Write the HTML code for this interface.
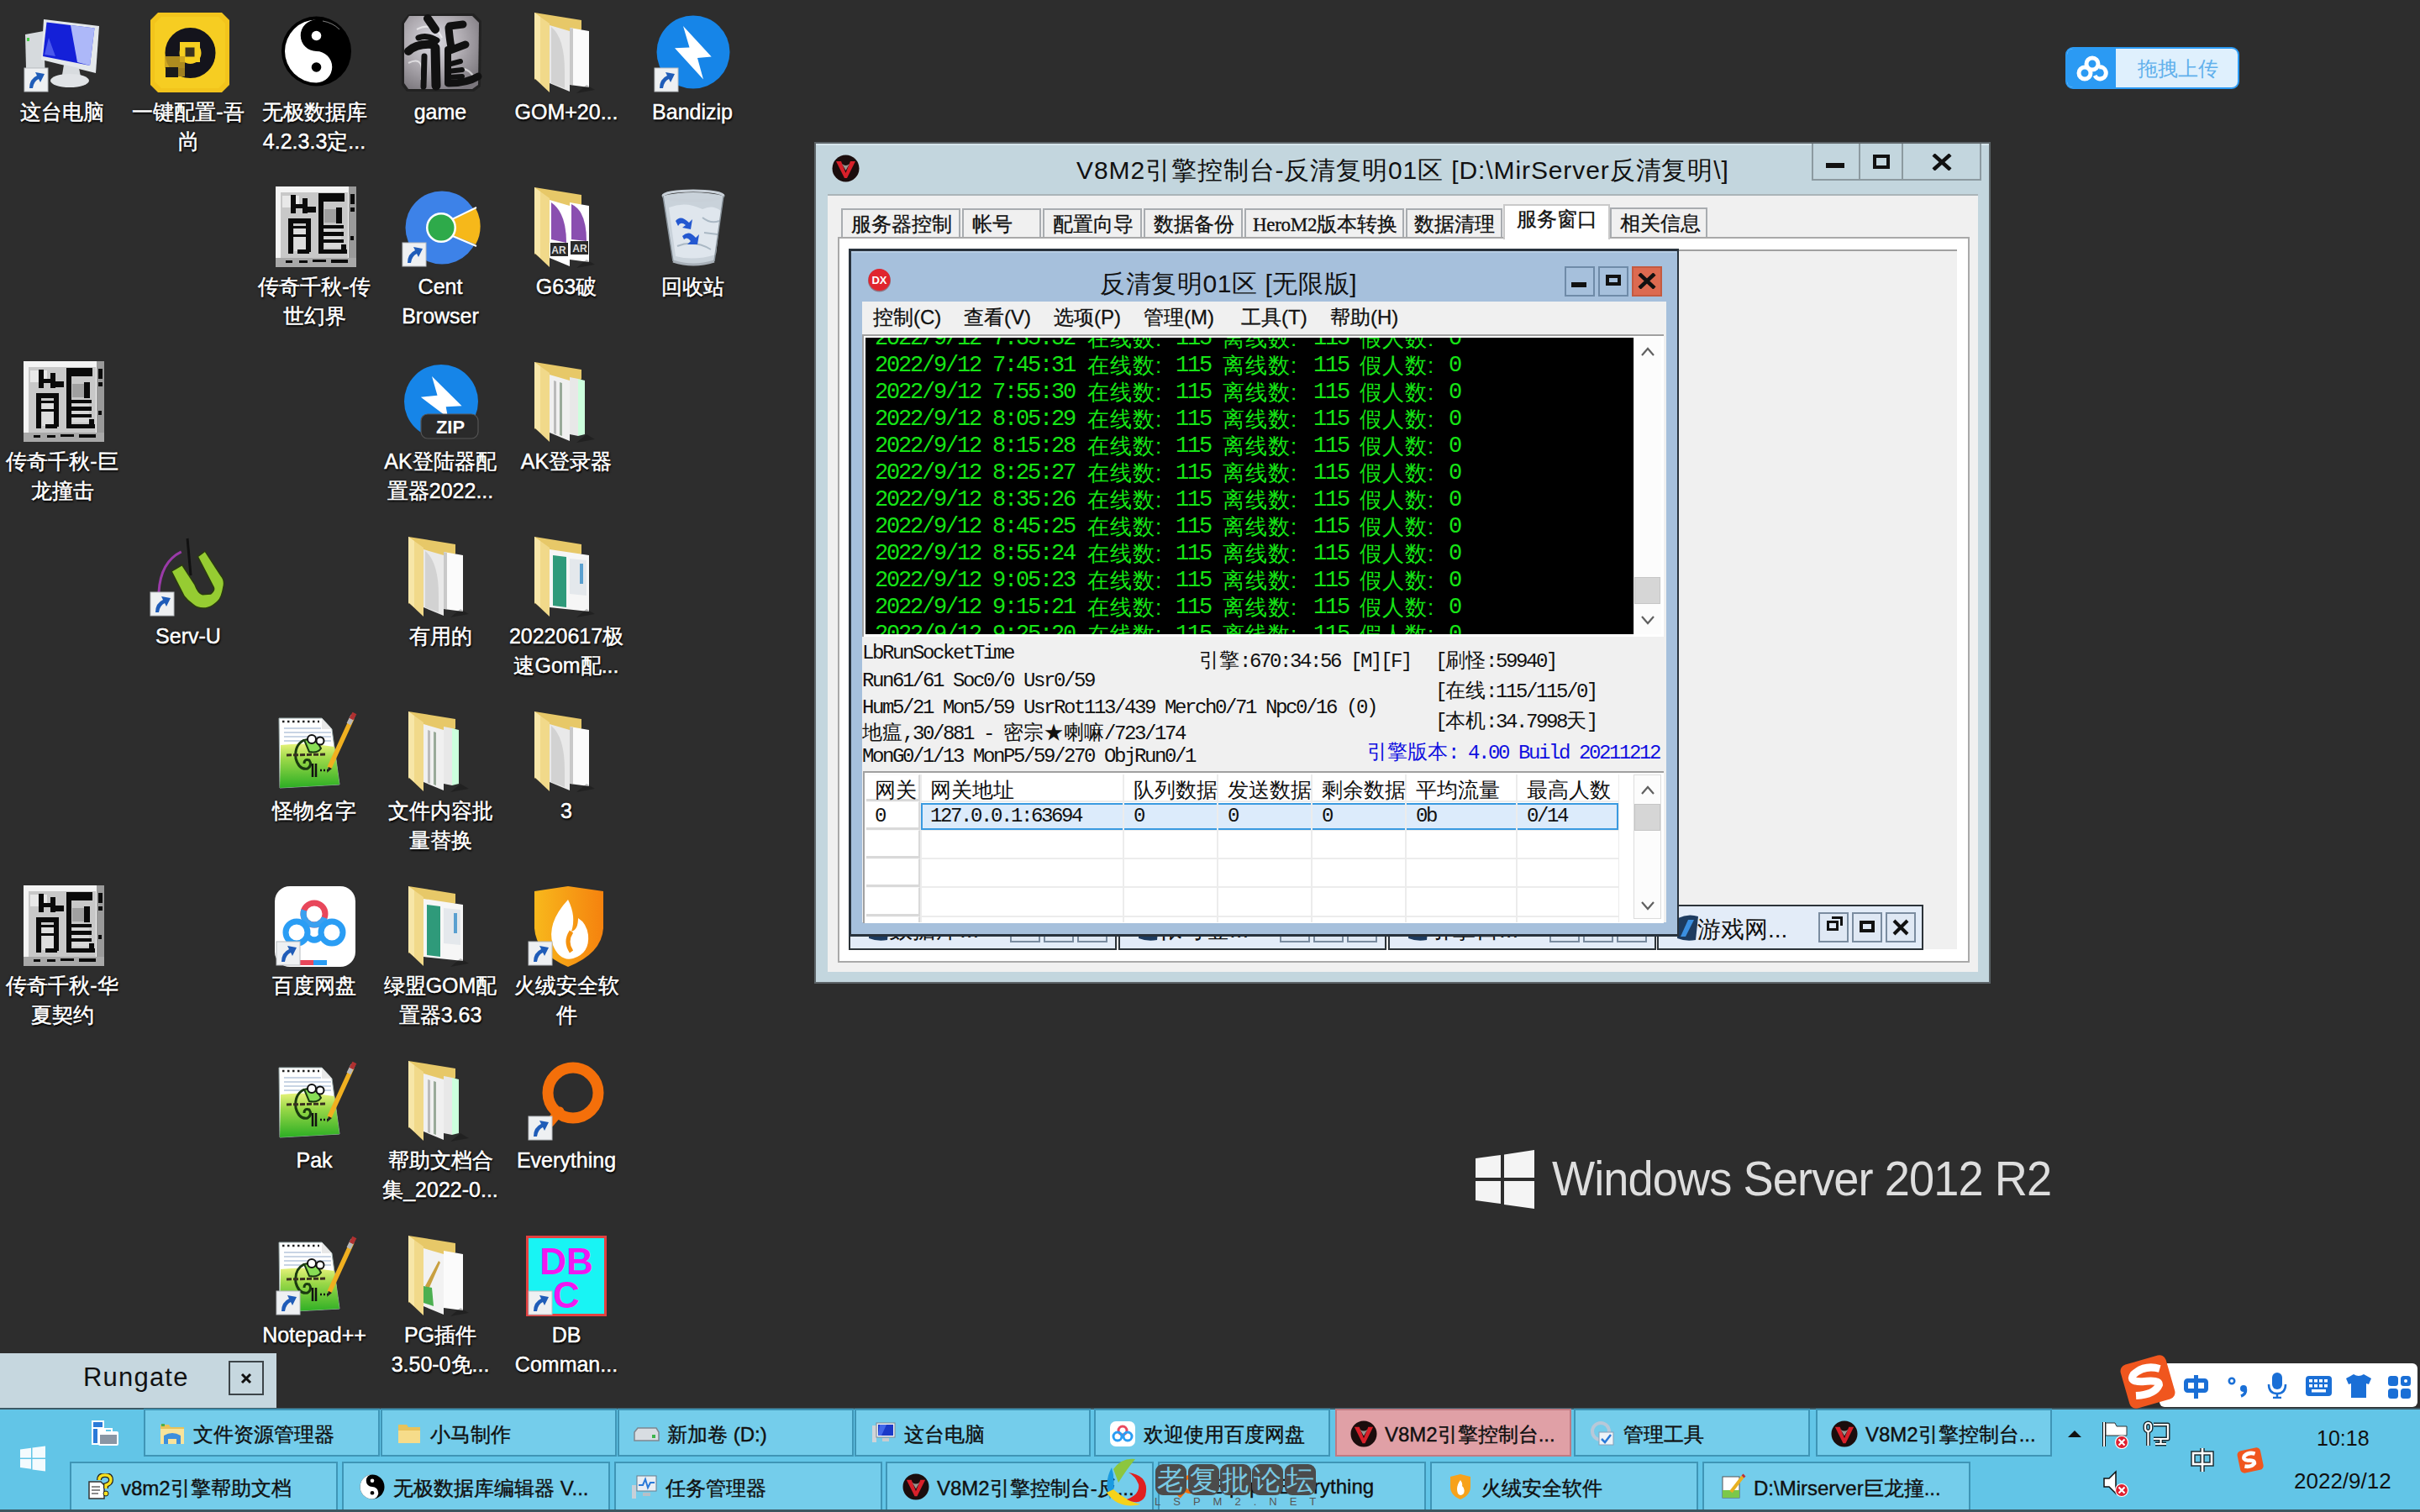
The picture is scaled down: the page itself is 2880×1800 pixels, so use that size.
<!DOCTYPE html>
<html><head><meta charset="utf-8">
<style>
*{margin:0;padding:0;box-sizing:border-box}
html,body{width:2880px;height:1800px;overflow:hidden;background:#2d2d2d;font-family:"Liberation Sans",sans-serif}
.a{position:absolute}
.mono{font-family:"Liberation Mono",monospace}
/* main window */
#mw{left:970px;top:170px;width:1398px;height:1000px;background:#c3d6de;border:1px solid #6f7a80}
#con .ln{position:absolute;left:0;height:32px;white-space:nowrap;color:#16e416;font-family:"Liberation Mono",monospace;font-size:27px;letter-spacing:-2.2px}
#con .ln span{position:absolute;top:0}
#con .ln .c{font-family:"Liberation Sans",sans-serif;letter-spacing:1px;font-size:26px;top:-2px}
.st{position:absolute;white-space:nowrap;font-family:"Liberation Mono",monospace;font-size:24px;letter-spacing:-2.4px;color:#111}
.cjk{font-family:"Liberation Sans",sans-serif;letter-spacing:0}
.tab{position:absolute;top:248px;height:36px;background:#f0f0f0;border:2px solid #a8acb0;border-bottom:none;font-size:24px;color:#111;padding-left:10px;line-height:34px;white-space:nowrap;-webkit-text-stroke:0.3px #111}
.mi{position:absolute;top:362px;font-size:24px;color:#111;white-space:nowrap;-webkit-text-stroke:0.3px #111}
.lbl{position:absolute;width:160px;text-align:center;font-size:25px;line-height:35px;color:#fff;white-space:nowrap;-webkit-text-stroke:0.5px #fff;text-shadow:1px 2px 2px #000,0 0 3px #000}
/* taskbar */
#tb{left:0;top:1676px;width:2880px;height:124px;background:#62c5e7;border-top:2px solid #3b5a66}
.ti{position:absolute;height:57px;background:#74cdeb;border:2px solid #3f95b6;font-size:24px;color:#111;white-space:nowrap;overflow:hidden}
.ti .tx{position:absolute;top:13px;-webkit-text-stroke:0.4px #111}
.ti .ic{position:absolute;top:14px;width:32px;height:28px}
</style></head><body>

<!--DESKTOP-->
<svg width="0" height="0" style="position:absolute"><defs><pattern id="dith" width="12" height="12" patternUnits="userSpaceOnUse"><rect width="6" height="6" fill="#d8d8d8"/><rect x="6" y="6" width="6" height="6" fill="#cfcfcf"/><rect x="6" y="0" width="6" height="6" fill="#7a7a7a"/></pattern></defs></svg>
<svg class="a" style="left:26px;top:15px;overflow:visible" width="96" height="96" viewBox="0 0 96 96"><path d="M4 26 L26 22 L28 84 L5 66Z" fill="#d6dadd"/><rect x="6" y="30" width="3" height="4" fill="#4c4"/><path d="M26 8 L92 16 L88 72 L23 56Z" fill="#e4e8eb"/><path d="M29.5 11.5 L86.5 18.5 L81 63 L25 52Z" fill="#1420d8"/><path d="M58 15 L86.5 18.5 L81 63 L66 59Z" fill="#c8d4ff" opacity=".85"/><path d="M32 30 L40 52 L27 50Z" fill="#8090ff" opacity=".5"/><path d="M50 62 L68 66 L70 76 L48 74Z" fill="#d8dcdf"/><ellipse cx="57" cy="81" rx="23" ry="8" fill="#e0e3e6"/><rect x="3" y="66" width="28" height="28" fill="#eef0f2"/><rect x="3" y="66" width="28" height="28" fill="none" stroke="#b8bcc0" stroke-width="1"/><path d="M9 90 Q9 79 18 75 L16 71 L27 73 L22 83 L20 79 Q14 82 13 90Z" fill="#1f5cb8"/></svg>
<div class="lbl" style="left:-6px;top:116px">这台电脑</div>
<svg class="a" style="left:176px;top:15px;overflow:visible" width="96" height="96" viewBox="0 0 96 96"><path d="M12 0 H88 L97 9 V86 L88 95 H12 L3 86 V9Z" fill="#f2c41c"/><path d="M16 5 H84 L92 13 V82 L84 90 H16 L8 82 V13Z" fill="#f6cd22"/><circle cx="50.5" cy="48" r="21.5" fill="none" stroke="#14141c" stroke-width="17"/><rect x="38" y="35" width="24" height="24" fill="#f6d020"/><rect x="44.5" y="41.5" width="11" height="11" fill="#3a3420"/><rect x="20" y="52" width="24" height="14" fill="#c8a020" opacity=".85"/><rect x="21" y="65" width="15" height="12" fill="#1a1a1a"/><rect x="36" y="66" width="8" height="10" fill="#a08020"/></svg>
<div class="lbl" style="left:144px;top:116px">一键配置-吾</div>
<div class="lbl" style="left:144px;top:151px">尚</div>
<svg class="a" style="left:326px;top:15px;overflow:visible" width="96" height="96" viewBox="0 0 96 96"><circle cx="50.5" cy="46" r="41.5" fill="#000"/><path d="M50.5 8.5 A37.5 37.5 0 0 0 50.5 83.5 A18.75 18.75 0 0 0 50.5 46 A18.75 18.75 0 0 1 50.5 8.5Z" fill="#fff"/><circle cx="50.5" cy="27.5" r="5.8" fill="#fff"/><circle cx="50.5" cy="65" r="5.8" fill="#000"/><path d="M58 10 Q70 12 78 20" stroke="#fff" stroke-width="1" opacity=".5" fill="none"/></svg>
<div class="lbl" style="left:294px;top:116px">无极数据库</div>
<div class="lbl" style="left:294px;top:151px">4.2.3.3定...</div>
<svg class="a" style="left:476px;top:15px;overflow:visible" width="96" height="96" viewBox="0 0 96 96"><defs><radialGradient id="gst" cx=".4" cy=".35" r=".75"><stop offset="0" stop-color="#dcdce4"/><stop offset=".5" stop-color="#b0acb2"/><stop offset="1" stop-color="#7a767c"/></radialGradient></defs><path d="M10 2 L88 1 L97 10 L96 88 L88 94 L8 94 L2 86 L2 12Z" fill="#222"/><path d="M11 4 L86 4 L94 12 L93 86 L86 91 L10 91 L5 84 L5 13Z" fill="url(#gst)"/><path d="M20 20 Q40 10 50 30 M60 70 Q80 60 90 80 M10 60 Q30 50 25 80" stroke="#fff" stroke-width="2" fill="none" opacity=".6"/><g stroke="#111" stroke-linecap="round" fill="none"><path d="M33 7 L42 20" stroke-width="10"/><path d="M22 30 Q32 26 44 33" stroke-width="7"/><path d="M10 46 Q20 36 40 38" stroke-width="10"/><path d="M42 42 L43 87" stroke-width="11"/><path d="M29 52 L28 88" stroke-width="7"/><path d="M59 16 L75 14 M58 18 Q60 40 62 44 L78 38" stroke-width="9"/><path d="M57 62 L72 58 M57 70 L74 68 M57 77 L74 76" stroke-width="6"/><path d="M58 84 Q80 84 93 76" stroke-width="9"/><path d="M57 44 L57 84" stroke-width="8"/></g></svg>
<div class="lbl" style="left:444px;top:116px">game</div>
<svg class="a" style="left:626px;top:15px;overflow:visible" width="96" height="96" viewBox="0 0 96 96"><path d="M10 0 L66 9 L66 20 L10 80Z" fill="#e7c868"/><path d="M28 15 L52 22 L52 94 L28 84Z" fill="#e9e9e9"/><path d="M30 17 Q46 30 46 70 L46 90 L30 84Z" fill="#d2d2d2"/><path d="M52 18 L75 22 L75 89 L52 86Z" fill="#fbfbfb"/><path d="M52 18 L56 19 L56 86 L52 86Z" fill="#c9c9c9"/><path d="M72 86 L82 92 L60 96 Z" fill="#000" opacity=".25"/><path d="M10 0 L28 13 L28 95 L10 78Z" fill="#f1d98a"/><path d="M10 0 L17 5 L17 84 L10 78Z" fill="#f7e6a8"/></svg>
<div class="lbl" style="left:594px;top:116px">GOM+20...</div>
<svg class="a" style="left:776px;top:15px;overflow:visible" width="96" height="96" viewBox="0 0 96 96"><circle cx="49" cy="47" r="43.5" fill="#1685e8"/><path d="M37 16 L70.7 52.5 L54 54 L61 79.4 L27 42.3 L44.5 41.6Z" fill="#fff"/><rect x="3" y="66" width="28" height="28" fill="#eef0f2"/><rect x="3" y="66" width="28" height="28" fill="none" stroke="#b8bcc0" stroke-width="1"/><path d="M9 90 Q9 79 18 75 L16 71 L27 73 L22 83 L20 79 Q14 82 13 90Z" fill="#1f5cb8"/></svg>
<div class="lbl" style="left:744px;top:116px">Bandizip</div>
<svg class="a" style="left:326px;top:223px;overflow:visible" width="96" height="96" viewBox="0 0 96 96"><rect x="2" y="-1" width="96" height="96" fill="#f4f4f4"/><rect x="8" y="6" width="80" height="80" fill="#c8c8c8"/><rect x="10" y="10" width="20" height="14" fill="#e8e8e8"/><rect x="60" y="26" width="14" height="16" fill="#a0a0a0"/><rect x="24" y="46" width="14" height="30" fill="#dedede"/><rect x="60" y="50" width="20" height="22" fill="#d8d8d8"/><rect x="89" y="-1" width="9" height="96" fill="#9a9a9a"/><rect x="2" y="84" width="96" height="11" fill="#a8a8a8"/><g fill="#0a0a0a"><rect x="20" y="9" width="6" height="22"/><rect x="26" y="20" width="8" height="5"/><rect x="34" y="13" width="6" height="18"/><rect x="40" y="23" width="10" height="7"/><rect x="53" y="7" width="6" height="72"/><rect x="58" y="7" width="26" height="10"/><rect x="74" y="24" width="7" height="19"/><rect x="17" y="37" width="6" height="42"/><rect x="22" y="37" width="22" height="6"/><rect x="38" y="42" width="6" height="35"/><rect x="22" y="46" width="17" height="3"/><rect x="22" y="56" width="17" height="3"/><rect x="28" y="74" width="14" height="5"/><rect x="59" y="45" width="24" height="4"/><rect x="59" y="53" width="24" height="5"/><rect x="59" y="62" width="24" height="4"/><rect x="53" y="74" width="34" height="5"/><rect x="80" y="68" width="6" height="8"/><rect x="91" y="8" width="5" height="12"/><rect x="91" y="24" width="5" height="5"/><rect x="91" y="58" width="4" height="5"/><rect x="14" y="87" width="8" height="3"/><rect x="30" y="87" width="10" height="3"/><rect x="46" y="86" width="16" height="3"/><rect x="68" y="86" width="20" height="4"/></g></svg>
<div class="lbl" style="left:294px;top:324px">传奇千秋-传</div>
<div class="lbl" style="left:294px;top:359px">世幻界</div>
<svg class="a" style="left:476px;top:223px;overflow:visible" width="96" height="96" viewBox="0 0 96 96"><circle cx="50" cy="48" r="43.5" fill="#3d82e8"/><path d="M60 40 L90 25 A43.5 43.5 0 0 1 90 68 L60 56Z" fill="#f6b81a"/><path d="M58 40 L91 24 M58 56 L91 70" stroke="#fff" stroke-width="2"/><circle cx="49" cy="48" r="18" fill="#fff"/><circle cx="49" cy="48" r="15.5" fill="#2eaa4a"/><rect x="3" y="66" width="28" height="28" fill="#eef0f2"/><rect x="3" y="66" width="28" height="28" fill="none" stroke="#b8bcc0" stroke-width="1"/><path d="M9 90 Q9 79 18 75 L16 71 L27 73 L22 83 L20 79 Q14 82 13 90Z" fill="#1f5cb8"/></svg>
<div class="lbl" style="left:444px;top:324px">Cent</div>
<div class="lbl" style="left:444px;top:359px">Browser</div>
<svg class="a" style="left:626px;top:223px;overflow:visible" width="96" height="96" viewBox="0 0 96 96"><path d="M10 0 L66 9 L66 20 L10 80Z" fill="#e7c868"/><path d="M28 15 L52 22 L52 94 L28 84Z" fill="#fff"/><path d="M30 18 Q48 30 48 66 L30 62Z" fill="#8a4fb0"/><rect x="29" y="66" width="21" height="16" fill="#2a2a2a"/><text x="39" y="79" font-size="12" font-weight="bold" fill="#ddd" text-anchor="middle" font-family="Liberation Sans">AR</text><path d="M52 18 L75 22 L75 89 L52 86Z" fill="#fff"/><path d="M54 20 Q72 28 72 64 L54 62Z" fill="#8a4fb0"/><rect x="53" y="64" width="21" height="16" fill="#2a2a2a"/><text x="64" y="77" font-size="12" font-weight="bold" fill="#ddd" text-anchor="middle" font-family="Liberation Sans">AR</text><path d="M72 86 L82 92 L60 96 Z" fill="#000" opacity=".25"/><path d="M10 0 L28 13 L28 95 L10 78Z" fill="#f1d98a"/><path d="M10 0 L17 5 L17 84 L10 78Z" fill="#f7e6a8"/></svg>
<div class="lbl" style="left:594px;top:324px">G63破</div>
<svg class="a" style="left:776px;top:223px;overflow:visible" width="96" height="96" viewBox="0 0 96 96"><path d="M13 10 Q49 2 85 10 L74 88 Q49 97 25 88Z" fill="#c9d2da"/><path d="M20 24 Q40 16 60 26 Q72 20 82 28 L76 80 Q50 88 28 82Z" fill="#dfe6ed"/><path d="M60 36 Q70 44 80 40 M62 54 L78 56 M30 70 Q50 62 70 74" stroke="#aab8c4" stroke-width="2" fill="none"/><ellipse cx="49" cy="10" rx="36" ry="6" fill="none" stroke="#c8d0d8" stroke-width="3"/><path d="M25 88 Q49 96 74 88" stroke="#a8b0b8" stroke-width="3" fill="none"/><path d="M13 10 L25 88 M85 10 L74 88" stroke="#8a949c" stroke-width="1.5"/><path d="M28 40 Q34 32 44 42 L48 38 L46 50 L36 48 L40 45 Q34 40 31 46Z" fill="#2458d0"/><path d="M36 58 Q44 50 52 60 L56 56 L54 68 L42 68 L46 64 Q42 58 38 62Z" fill="#2458d0"/></svg>
<div class="lbl" style="left:744px;top:324px">回收站</div>
<svg class="a" style="left:26px;top:431px;overflow:visible" width="96" height="96" viewBox="0 0 96 96"><rect x="2" y="-1" width="96" height="96" fill="#f4f4f4"/><rect x="8" y="6" width="80" height="80" fill="#c8c8c8"/><rect x="10" y="10" width="20" height="14" fill="#e8e8e8"/><rect x="60" y="26" width="14" height="16" fill="#a0a0a0"/><rect x="24" y="46" width="14" height="30" fill="#dedede"/><rect x="60" y="50" width="20" height="22" fill="#d8d8d8"/><rect x="89" y="-1" width="9" height="96" fill="#9a9a9a"/><rect x="2" y="84" width="96" height="11" fill="#a8a8a8"/><g fill="#0a0a0a"><rect x="20" y="9" width="6" height="22"/><rect x="26" y="20" width="8" height="5"/><rect x="34" y="13" width="6" height="18"/><rect x="40" y="23" width="10" height="7"/><rect x="53" y="7" width="6" height="72"/><rect x="58" y="7" width="26" height="10"/><rect x="74" y="24" width="7" height="19"/><rect x="17" y="37" width="6" height="42"/><rect x="22" y="37" width="22" height="6"/><rect x="38" y="42" width="6" height="35"/><rect x="22" y="46" width="17" height="3"/><rect x="22" y="56" width="17" height="3"/><rect x="28" y="74" width="14" height="5"/><rect x="59" y="45" width="24" height="4"/><rect x="59" y="53" width="24" height="5"/><rect x="59" y="62" width="24" height="4"/><rect x="53" y="74" width="34" height="5"/><rect x="80" y="68" width="6" height="8"/><rect x="91" y="8" width="5" height="12"/><rect x="91" y="24" width="5" height="5"/><rect x="91" y="58" width="4" height="5"/><rect x="14" y="87" width="8" height="3"/><rect x="30" y="87" width="10" height="3"/><rect x="46" y="86" width="16" height="3"/><rect x="68" y="86" width="20" height="4"/></g></svg>
<div class="lbl" style="left:-6px;top:532px">传奇千秋-巨</div>
<div class="lbl" style="left:-6px;top:567px">龙撞击</div>
<svg class="a" style="left:476px;top:431px;overflow:visible" width="96" height="96" viewBox="0 0 96 96"><circle cx="49" cy="47" r="44" fill="#1685e8"/><path d="M38 17 L73.6 52.2 L54.7 53.3 L57 66 L24.8 41.7 L44.5 39.8Z" fill="#fff"/><rect x="25" y="62" width="68" height="29" rx="8" fill="#2a2a2a" stroke="#555" stroke-width="1.2"/><text x="60" y="85" font-size="22" font-weight="bold" fill="#fff" text-anchor="middle" style="font-family:'Liberation Sans'">ZIP</text></svg>
<div class="lbl" style="left:444px;top:532px">AK登陆器配</div>
<div class="lbl" style="left:444px;top:567px">置器2022...</div>
<svg class="a" style="left:626px;top:431px;overflow:visible" width="96" height="96" viewBox="0 0 96 96"><path d="M10 0 L66 9 L66 20 L10 80Z" fill="#e7c868"/><path d="M28 15 L52 22 L52 94 L28 84Z" fill="#f0f0f0"/><path d="M33 22 L36 23 L36 86 L33 85Z" fill="#bbb"/><path d="M40 24 L43 25 L43 88 L40 87Z" fill="#9a9"/><path d="M52 18 L62 20 L62 88 L52 86Z" fill="#e8e8e8"/><path d="M62 20 L70 22 L70 86 L62 88Z" fill="#cfd"/><path d="M72 86 L82 92 L60 96 Z" fill="#000" opacity=".25"/><path d="M10 0 L28 13 L28 95 L10 78Z" fill="#f1d98a"/><path d="M10 0 L17 5 L17 84 L10 78Z" fill="#f7e6a8"/></svg>
<div class="lbl" style="left:594px;top:532px">AK登录器</div>
<svg class="a" style="left:176px;top:639px;overflow:visible" width="96" height="96" viewBox="0 0 96 96"><path d="M39.7 17.9 Q15 30 13 66" stroke="#9a3aa8" stroke-width="3" fill="none"/><path d="M47 2 L51 46" stroke="#111" stroke-width="3"/><path d="M28 41.2 L40.7 33.6 L55.7 56.5 Q60 68 65.1 68.8 L74.6 68.1 Q80 64 78.2 60.1 L59.3 23.7 L68 17.2 L87 46.3 Q92 52 89.9 60 Q88 72 83.3 76.8 Q76 84 68.8 84.9 Q60 86 54.2 81.2 Q47 76 43.3 71Z" fill="#96cc32" stroke="#2a3a10" stroke-width="1.5"/><rect x="3" y="66" width="28" height="28" fill="#eef0f2"/><rect x="3" y="66" width="28" height="28" fill="none" stroke="#b8bcc0" stroke-width="1"/><path d="M9 90 Q9 79 18 75 L16 71 L27 73 L22 83 L20 79 Q14 82 13 90Z" fill="#1f5cb8"/></svg>
<div class="lbl" style="left:144px;top:740px">Serv-U</div>
<svg class="a" style="left:476px;top:639px;overflow:visible" width="96" height="96" viewBox="0 0 96 96"><path d="M10 0 L66 9 L66 20 L10 80Z" fill="#e7c868"/><path d="M28 15 L52 22 L52 94 L28 84Z" fill="#e9e9e9"/><path d="M30 17 Q46 30 46 70 L46 90 L30 84Z" fill="#d2d2d2"/><path d="M52 18 L75 22 L75 89 L52 86Z" fill="#fbfbfb"/><path d="M52 18 L56 19 L56 86 L52 86Z" fill="#c9c9c9"/><path d="M72 86 L82 92 L60 96 Z" fill="#000" opacity=".25"/><path d="M10 0 L28 13 L28 95 L10 78Z" fill="#f1d98a"/><path d="M10 0 L17 5 L17 84 L10 78Z" fill="#f7e6a8"/></svg>
<div class="lbl" style="left:444px;top:740px">有用的</div>
<svg class="a" style="left:626px;top:639px;overflow:visible" width="96" height="96" viewBox="0 0 96 96"><path d="M10 0 L66 9 L66 20 L10 80Z" fill="#e7c868"/><path d="M28 15 L75 22 L75 89 L28 84Z" fill="#f6f6f6"/><path d="M32 22 L48 24 L48 84 L32 82Z" fill="#2f9a7a"/><path d="M52 26 L72 28 L72 70 L52 68Z" fill="#e4e8ec"/><path d="M64 32 L68 32 L68 56 L64 56Z" fill="#5aa0d0"/><path d="M72 86 L82 92 L60 96 Z" fill="#000" opacity=".25"/><path d="M10 0 L28 13 L28 95 L10 78Z" fill="#f1d98a"/><path d="M10 0 L17 5 L17 84 L10 78Z" fill="#f7e6a8"/></svg>
<div class="lbl" style="left:594px;top:740px">20220617极</div>
<div class="lbl" style="left:594px;top:775px">速Gom配...</div>
<svg class="a" style="left:326px;top:847px;overflow:visible" width="96" height="96" viewBox="0 0 96 96"><defs><linearGradient id="nppg" x1="0" y1="0" x2="0" y2="1"><stop offset="0" stop-color="#e6f27a"/><stop offset=".35" stop-color="#9ad848"/><stop offset="1" stop-color="#2cae24"/></linearGradient></defs><path d="M6 8 L57 8 L69 21 L78 87 L7 91Z" fill="#fff" stroke="#9aa" stroke-width="1"/><path d="M57 8 L57 21 L69 21Z" fill="#e8e8e8"/><path d="M10 12 L54 12" stroke="#222" stroke-width="2.5" stroke-dasharray="2.5 3.5"/><path d="M12 20 L56 20 M12 25 L68 25 M12 30 L68 30 M12 35 L68 35" stroke="#c8d4e4" stroke-width="2"/><path d="M8 40 Q40 36 72 42 L78 87 L7 91Z" fill="url(#nppg)"/><path d="M36 34 Q24 40 26 56 Q30 70 40 68 Q46 64 42 58 Q36 56 36 62" stroke="#1a3a10" stroke-width="3" fill="none"/><path d="M36 34 Q50 30 56 44 Q52 50 42 48Z" fill="#88dd55" stroke="#1a3a10" stroke-width="2"/><circle cx="45" cy="33" r="5" fill="#fff" stroke="#111" stroke-width="2"/><circle cx="55" cy="35" r="4.5" fill="#fff" stroke="#111" stroke-width="2"/><path d="M15 52 L62 51" stroke="#3a3020" stroke-width="3" stroke-dasharray="6 2"/><path d="M46 62 L46 78 M50 62 L50 78" stroke="#111" stroke-width="2.5"/><path d="M55 70 L66 70" stroke="#111" stroke-width="2.5" stroke-dasharray="2 2"/><path d="M66 67 L93 8" stroke="#f0b020" stroke-width="5.5"/><path d="M89 15 L94 5" stroke="#b8b8b8" stroke-width="5.5"/><path d="M92 9 L96 2" stroke="#b03030" stroke-width="5.5"/><path d="M63 73 L65 66 L69 68Z" fill="#222"/></svg>
<div class="lbl" style="left:294px;top:948px">怪物名字</div>
<svg class="a" style="left:476px;top:847px;overflow:visible" width="96" height="96" viewBox="0 0 96 96"><path d="M10 0 L66 9 L66 20 L10 80Z" fill="#e7c868"/><path d="M28 15 L52 22 L52 94 L28 84Z" fill="#f0f0f0"/><path d="M33 22 L36 23 L36 86 L33 85Z" fill="#bbb"/><path d="M40 24 L43 25 L43 88 L40 87Z" fill="#9a9"/><path d="M52 18 L62 20 L62 88 L52 86Z" fill="#e8e8e8"/><path d="M62 20 L70 22 L70 86 L62 88Z" fill="#cfd"/><path d="M72 86 L82 92 L60 96 Z" fill="#000" opacity=".25"/><path d="M10 0 L28 13 L28 95 L10 78Z" fill="#f1d98a"/><path d="M10 0 L17 5 L17 84 L10 78Z" fill="#f7e6a8"/></svg>
<div class="lbl" style="left:444px;top:948px">文件内容批</div>
<div class="lbl" style="left:444px;top:983px">量替换</div>
<svg class="a" style="left:626px;top:847px;overflow:visible" width="96" height="96" viewBox="0 0 96 96"><path d="M10 0 L66 9 L66 20 L10 80Z" fill="#e7c868"/><path d="M28 15 L52 22 L52 94 L28 84Z" fill="#e9e9e9"/><path d="M30 17 Q46 30 46 70 L46 90 L30 84Z" fill="#d2d2d2"/><path d="M52 18 L75 22 L75 89 L52 86Z" fill="#fbfbfb"/><path d="M52 18 L56 19 L56 86 L52 86Z" fill="#c9c9c9"/><path d="M72 86 L82 92 L60 96 Z" fill="#000" opacity=".25"/><path d="M10 0 L28 13 L28 95 L10 78Z" fill="#f1d98a"/><path d="M10 0 L17 5 L17 84 L10 78Z" fill="#f7e6a8"/></svg>
<div class="lbl" style="left:594px;top:948px">3</div>
<svg class="a" style="left:26px;top:1055px;overflow:visible" width="96" height="96" viewBox="0 0 96 96"><rect x="2" y="-1" width="96" height="96" fill="#f4f4f4"/><rect x="8" y="6" width="80" height="80" fill="#c8c8c8"/><rect x="10" y="10" width="20" height="14" fill="#e8e8e8"/><rect x="60" y="26" width="14" height="16" fill="#a0a0a0"/><rect x="24" y="46" width="14" height="30" fill="#dedede"/><rect x="60" y="50" width="20" height="22" fill="#d8d8d8"/><rect x="89" y="-1" width="9" height="96" fill="#9a9a9a"/><rect x="2" y="84" width="96" height="11" fill="#a8a8a8"/><g fill="#0a0a0a"><rect x="20" y="9" width="6" height="22"/><rect x="26" y="20" width="8" height="5"/><rect x="34" y="13" width="6" height="18"/><rect x="40" y="23" width="10" height="7"/><rect x="53" y="7" width="6" height="72"/><rect x="58" y="7" width="26" height="10"/><rect x="74" y="24" width="7" height="19"/><rect x="17" y="37" width="6" height="42"/><rect x="22" y="37" width="22" height="6"/><rect x="38" y="42" width="6" height="35"/><rect x="22" y="46" width="17" height="3"/><rect x="22" y="56" width="17" height="3"/><rect x="28" y="74" width="14" height="5"/><rect x="59" y="45" width="24" height="4"/><rect x="59" y="53" width="24" height="5"/><rect x="59" y="62" width="24" height="4"/><rect x="53" y="74" width="34" height="5"/><rect x="80" y="68" width="6" height="8"/><rect x="91" y="8" width="5" height="12"/><rect x="91" y="24" width="5" height="5"/><rect x="91" y="58" width="4" height="5"/><rect x="14" y="87" width="8" height="3"/><rect x="30" y="87" width="10" height="3"/><rect x="46" y="86" width="16" height="3"/><rect x="68" y="86" width="20" height="4"/></g></svg>
<div class="lbl" style="left:-6px;top:1156px">传奇千秋-华</div>
<div class="lbl" style="left:-6px;top:1191px">夏契约</div>
<svg class="a" style="left:326px;top:1055px;overflow:visible" width="96" height="96" viewBox="0 0 96 96"><rect x="1" y="0" width="96" height="96" rx="18" fill="#fff"/><circle cx="48" cy="33" r="13" fill="none" stroke="#e8475b" stroke-width="7"/><path d="M35 33 A13 13 0 0 1 61 33" stroke="#3aa0f0" stroke-width="7" fill="none" transform="rotate(200 48 33)"/><circle cx="27" cy="55" r="13" fill="none" stroke="#2a9df4" stroke-width="7"/><circle cx="69" cy="55" r="13" fill="none" stroke="#2a9df4" stroke-width="7"/><path d="M40 60 Q48 68 56 60" stroke="#2a9df4" stroke-width="7" fill="none"/><rect x="31" y="88" width="16" height="6" fill="#e8475b"/><rect x="47" y="88" width="16" height="6" fill="#2a9df4"/><rect x="3" y="66" width="28" height="28" fill="#eef0f2"/><rect x="3" y="66" width="28" height="28" fill="none" stroke="#b8bcc0" stroke-width="1"/><path d="M9 90 Q9 79 18 75 L16 71 L27 73 L22 83 L20 79 Q14 82 13 90Z" fill="#1f5cb8"/></svg>
<div class="lbl" style="left:294px;top:1156px">百度网盘</div>
<svg class="a" style="left:476px;top:1055px;overflow:visible" width="96" height="96" viewBox="0 0 96 96"><path d="M10 0 L66 9 L66 20 L10 80Z" fill="#e7c868"/><path d="M28 15 L75 22 L75 89 L28 84Z" fill="#f6f6f6"/><path d="M32 22 L48 24 L48 84 L32 82Z" fill="#2f9a7a"/><path d="M52 26 L72 28 L72 70 L52 68Z" fill="#e4e8ec"/><path d="M64 32 L68 32 L68 56 L64 56Z" fill="#5aa0d0"/><path d="M72 86 L82 92 L60 96 Z" fill="#000" opacity=".25"/><path d="M10 0 L28 13 L28 95 L10 78Z" fill="#f1d98a"/><path d="M10 0 L17 5 L17 84 L10 78Z" fill="#f7e6a8"/></svg>
<div class="lbl" style="left:444px;top:1156px">绿盟GOM配</div>
<div class="lbl" style="left:444px;top:1191px">置器3.63</div>
<svg class="a" style="left:626px;top:1055px;overflow:visible" width="96" height="96" viewBox="0 0 96 96"><defs><linearGradient id="hr" x1="0" x2="1"><stop offset="0" stop-color="#f8b81c"/><stop offset="1" stop-color="#f5820e"/></linearGradient></defs><path d="M10 6 L50 0 L92 6 L92 50 Q90 80 50 96 Q12 80 10 50Z" fill="url(#hr)"/><path d="M50 16 Q24 44 32 70 Q40 90 56 86 Q76 80 74 58 Q72 44 62 38 Q62 52 54 54 Q60 36 50 16Z" fill="#fff"/><path d="M54 54 Q46 66 54 78" stroke="#f5920e" stroke-width="5" fill="none"/><rect x="3" y="66" width="28" height="28" fill="#eef0f2"/><rect x="3" y="66" width="28" height="28" fill="none" stroke="#b8bcc0" stroke-width="1"/><path d="M9 90 Q9 79 18 75 L16 71 L27 73 L22 83 L20 79 Q14 82 13 90Z" fill="#1f5cb8"/></svg>
<div class="lbl" style="left:594px;top:1156px">火绒安全软</div>
<div class="lbl" style="left:594px;top:1191px">件</div>
<svg class="a" style="left:326px;top:1263px;overflow:visible" width="96" height="96" viewBox="0 0 96 96"><defs><linearGradient id="nppg" x1="0" y1="0" x2="0" y2="1"><stop offset="0" stop-color="#e6f27a"/><stop offset=".35" stop-color="#9ad848"/><stop offset="1" stop-color="#2cae24"/></linearGradient></defs><path d="M6 8 L57 8 L69 21 L78 87 L7 91Z" fill="#fff" stroke="#9aa" stroke-width="1"/><path d="M57 8 L57 21 L69 21Z" fill="#e8e8e8"/><path d="M10 12 L54 12" stroke="#222" stroke-width="2.5" stroke-dasharray="2.5 3.5"/><path d="M12 20 L56 20 M12 25 L68 25 M12 30 L68 30 M12 35 L68 35" stroke="#c8d4e4" stroke-width="2"/><path d="M8 40 Q40 36 72 42 L78 87 L7 91Z" fill="url(#nppg)"/><path d="M36 34 Q24 40 26 56 Q30 70 40 68 Q46 64 42 58 Q36 56 36 62" stroke="#1a3a10" stroke-width="3" fill="none"/><path d="M36 34 Q50 30 56 44 Q52 50 42 48Z" fill="#88dd55" stroke="#1a3a10" stroke-width="2"/><circle cx="45" cy="33" r="5" fill="#fff" stroke="#111" stroke-width="2"/><circle cx="55" cy="35" r="4.5" fill="#fff" stroke="#111" stroke-width="2"/><path d="M15 52 L62 51" stroke="#3a3020" stroke-width="3" stroke-dasharray="6 2"/><path d="M46 62 L46 78 M50 62 L50 78" stroke="#111" stroke-width="2.5"/><path d="M55 70 L66 70" stroke="#111" stroke-width="2.5" stroke-dasharray="2 2"/><path d="M66 67 L93 8" stroke="#f0b020" stroke-width="5.5"/><path d="M89 15 L94 5" stroke="#b8b8b8" stroke-width="5.5"/><path d="M92 9 L96 2" stroke="#b03030" stroke-width="5.5"/><path d="M63 73 L65 66 L69 68Z" fill="#222"/></svg>
<div class="lbl" style="left:294px;top:1364px">Pak</div>
<svg class="a" style="left:476px;top:1263px;overflow:visible" width="96" height="96" viewBox="0 0 96 96"><path d="M10 0 L66 9 L66 20 L10 80Z" fill="#e7c868"/><path d="M28 15 L52 22 L52 94 L28 84Z" fill="#f0f0f0"/><path d="M33 22 L36 23 L36 86 L33 85Z" fill="#bbb"/><path d="M40 24 L43 25 L43 88 L40 87Z" fill="#9a9"/><path d="M52 18 L62 20 L62 88 L52 86Z" fill="#e8e8e8"/><path d="M62 20 L70 22 L70 86 L62 88Z" fill="#cfd"/><path d="M72 86 L82 92 L60 96 Z" fill="#000" opacity=".25"/><path d="M10 0 L28 13 L28 95 L10 78Z" fill="#f1d98a"/><path d="M10 0 L17 5 L17 84 L10 78Z" fill="#f7e6a8"/></svg>
<div class="lbl" style="left:444px;top:1364px">帮助文档合</div>
<div class="lbl" style="left:444px;top:1399px">集_2022-0...</div>
<svg class="a" style="left:626px;top:1263px;overflow:visible" width="96" height="96" viewBox="0 0 96 96"><circle cx="56" cy="38" r="30" fill="none" stroke="#f46f0a" stroke-width="13"/><path d="M40 60 L28 74" stroke="#f46f0a" stroke-width="11" stroke-linecap="round"/><rect x="3" y="66" width="28" height="28" fill="#eef0f2"/><rect x="3" y="66" width="28" height="28" fill="none" stroke="#b8bcc0" stroke-width="1"/><path d="M9 90 Q9 79 18 75 L16 71 L27 73 L22 83 L20 79 Q14 82 13 90Z" fill="#1f5cb8"/></svg>
<div class="lbl" style="left:594px;top:1364px">Everything</div>
<svg class="a" style="left:326px;top:1471px;overflow:visible" width="96" height="96" viewBox="0 0 96 96"><defs><linearGradient id="nppg" x1="0" y1="0" x2="0" y2="1"><stop offset="0" stop-color="#e6f27a"/><stop offset=".35" stop-color="#9ad848"/><stop offset="1" stop-color="#2cae24"/></linearGradient></defs><path d="M6 8 L57 8 L69 21 L78 87 L7 91Z" fill="#fff" stroke="#9aa" stroke-width="1"/><path d="M57 8 L57 21 L69 21Z" fill="#e8e8e8"/><path d="M10 12 L54 12" stroke="#222" stroke-width="2.5" stroke-dasharray="2.5 3.5"/><path d="M12 20 L56 20 M12 25 L68 25 M12 30 L68 30 M12 35 L68 35" stroke="#c8d4e4" stroke-width="2"/><path d="M8 40 Q40 36 72 42 L78 87 L7 91Z" fill="url(#nppg)"/><path d="M36 34 Q24 40 26 56 Q30 70 40 68 Q46 64 42 58 Q36 56 36 62" stroke="#1a3a10" stroke-width="3" fill="none"/><path d="M36 34 Q50 30 56 44 Q52 50 42 48Z" fill="#88dd55" stroke="#1a3a10" stroke-width="2"/><circle cx="45" cy="33" r="5" fill="#fff" stroke="#111" stroke-width="2"/><circle cx="55" cy="35" r="4.5" fill="#fff" stroke="#111" stroke-width="2"/><path d="M15 52 L62 51" stroke="#3a3020" stroke-width="3" stroke-dasharray="6 2"/><path d="M46 62 L46 78 M50 62 L50 78" stroke="#111" stroke-width="2.5"/><path d="M55 70 L66 70" stroke="#111" stroke-width="2.5" stroke-dasharray="2 2"/><path d="M66 67 L93 8" stroke="#f0b020" stroke-width="5.5"/><path d="M89 15 L94 5" stroke="#b8b8b8" stroke-width="5.5"/><path d="M92 9 L96 2" stroke="#b03030" stroke-width="5.5"/><path d="M63 73 L65 66 L69 68Z" fill="#222"/><rect x="3" y="66" width="28" height="28" fill="#eef0f2"/><rect x="3" y="66" width="28" height="28" fill="none" stroke="#b8bcc0" stroke-width="1"/><path d="M9 90 Q9 79 18 75 L16 71 L27 73 L22 83 L20 79 Q14 82 13 90Z" fill="#1f5cb8"/></svg>
<div class="lbl" style="left:294px;top:1572px">Notepad++</div>
<svg class="a" style="left:476px;top:1471px;overflow:visible" width="96" height="96" viewBox="0 0 96 96"><path d="M10 0 L66 9 L66 20 L10 80Z" fill="#e7c868"/><path d="M28 15 L52 22 L52 94 L28 84Z" fill="#f2f2f2"/><path d="M52 18 L75 22 L75 89 L52 86Z" fill="#fbfbfb"/><path d="M30 60 L46 30 L48 32 L34 64Z" fill="#c8a040"/><path d="M28 60 L38 62 L40 84 L28 80Z" fill="#4caf50"/><path d="M72 86 L82 92 L60 96 Z" fill="#000" opacity=".25"/><path d="M10 0 L28 13 L28 95 L10 78Z" fill="#f1d98a"/><path d="M10 0 L17 5 L17 84 L10 78Z" fill="#f7e6a8"/></svg>
<div class="lbl" style="left:444px;top:1572px">PG插件</div>
<div class="lbl" style="left:444px;top:1607px">3.50-0免...</div>
<svg class="a" style="left:626px;top:1471px;overflow:visible" width="96" height="96" viewBox="0 0 96 96"><rect x="0" y="0" width="96" height="96" fill="#e24040"/><rect x="3" y="3" width="90" height="90" fill="#18f4f4"/><text x="48" y="46" font-size="44" font-weight="bold" fill="#f018f0" text-anchor="middle" style="font-family:'Liberation Sans'">DB</text><text x="48" y="86" font-size="44" font-weight="bold" fill="#f018f0" text-anchor="middle" style="font-family:'Liberation Sans'">C</text><rect x="3" y="66" width="28" height="28" fill="#eef0f2"/><rect x="3" y="66" width="28" height="28" fill="none" stroke="#b8bcc0" stroke-width="1"/><path d="M9 90 Q9 79 18 75 L16 71 L27 73 L22 83 L20 79 Q14 82 13 90Z" fill="#1f5cb8"/></svg>
<div class="lbl" style="left:594px;top:1572px">DB</div>
<div class="lbl" style="left:594px;top:1607px">Comman...</div>
<!--/DESKTOP-->
<!-- Windows Server logo -->
<svg class="a" style="left:1756px;top:1368px" width="72" height="72" viewBox="0 0 72 72">
<path d="M0 11 L30 7 L30 34 L0 34Z M34 6.5 L70 1 L70 34 L34 34Z M0 38 L30 38 L30 65 L0 61Z M34 38 L70 38 L70 71 L34 66Z" fill="#f4f4f4"/>
</svg>
<div class="a" style="left:1847px;top:1369px;font-size:58px;color:#dedede;white-space:nowrap;letter-spacing:-1px;transform-origin:0 0;transform:scaleX(0.935)">Windows Server 2012 R2</div>

<!-- Baidu upload button -->
<div class="a" style="left:2458px;top:56px;width:207px;height:50px;border-radius:9px;background:#dff0fd;border:2px solid #2b9af3;overflow:hidden">
 <div class="a" style="left:0;top:0;width:58px;height:46px;background:#2b9af3"></div><svg class="a" style="left:11px;top:8px" width="38" height="32" viewBox="0 0 38 32"><circle cx="19" cy="10" r="7" fill="none" stroke="#fff" stroke-width="5"/><circle cx="10" cy="21" r="7" fill="none" stroke="#fff" stroke-width="5"/><path d="M22 24 A7 7 0 1 0 27 14" fill="none" stroke="#fff" stroke-width="5"/></svg>
 <div class="a" style="left:84px;top:8px;font-size:24px;color:#62b0ec;white-space:nowrap">拖拽上传</div>
</div>

<!-- main window -->
<div class="a" style="left:969px;top:169px;width:1400px;height:1002px;background:#c3d6de;border:2px solid #5d6468"></div>
<div class="a" style="left:971px;top:171px;width:1396px;height:2px;background:#d6e5eb"></div>
<!-- title icon -->
<svg class="a" style="left:990px;top:184px" width="33" height="33" viewBox="0 0 33 33"><circle cx="16.5" cy="16.5" r="16" fill="#1b0d0d"/><path d="M5 8 L11 8 L16.5 22 L22 8 L28 8 L18 28 L15 28Z" fill="#d8202a"/><path d="M12 11 Q16.5 15 21 11 L16.5 19Z" fill="#bdb6b0" opacity=".8"/></svg>
<div class="a" style="left:1281px;top:183px;font-size:30px;letter-spacing:0.9px;color:#111;white-space:nowrap">V8M2引擎控制台-反清复明01区 [D:\MirServer反清复明\]</div>
<!-- caption buttons -->
<div class="a" style="left:2156px;top:171px;width:202px;height:44px;border:2px solid #8c9aa0;border-top:none;background:#c3d6de"></div>
<div class="a" style="left:2212px;top:171px;width:2px;height:43px;background:#8c9aa0"></div>
<div class="a" style="left:2263px;top:171px;width:2px;height:43px;background:#8c9aa0"></div>
<div class="a" style="left:2173px;top:194px;width:22px;height:6px;background:#111"></div>
<div class="a" style="left:2229px;top:184px;width:20px;height:17px;border:4px solid #111"></div>
<svg class="a" style="left:2299px;top:183px" width="24" height="20" viewBox="0 0 24 20"><path d="M2 1 L22 19 M22 1 L2 19" stroke="#111" stroke-width="4.5"/></svg>
<!-- client area -->
<div class="a" style="left:985px;top:231px;width:1369px;height:926px;background:#f0f0f0;border-top:2px solid #aab4b8"></div>
<!-- tabs -->
<div class="tab" style="left:1001px;width:142px">服务器控制</div>
<div class="tab" style="left:1145px;width:94px">帐号</div>
<div class="tab" style="left:1241px;width:118px">配置向导</div>
<div class="tab" style="left:1361px;width:118px">数据备份</div>
<div class="tab" style="left:1481px;width:190px;padding-left:8px"><span style="font-size:23px;font-family:'Liberation Serif',serif;letter-spacing:-0.3px">HeroM2</span>版本转换</div>
<div class="tab" style="left:1673px;width:115px;padding-left:8px">数据清理</div>
<div class="tab" style="left:1916px;width:116px;top:247px">相关信息</div>
<!-- tab panel -->
<div class="a" style="left:997px;top:282px;width:1347px;height:864px;background:#fff;border:2px solid #a9a9a9"></div>
<div class="tab" style="left:1789px;width:127px;top:243px;height:42px;background:#fff;border-color:#c9c9c9;padding-left:14px;line-height:32px;z-index:2">服务窗口</div>
<!-- MDI client -->
<div class="a" style="left:1010px;top:297px;width:1319px;height:833px;background:#f0f0f0;border-top:2px solid #a0a0a0;border-left:2px solid #a0a0a0"></div>
<!-- minimized MDI children -->
<div class="a" style="left:1010px;top:1077px;width:319px;height:54px;background:#e3ecf8;border:2px solid #2c3339"></div>
<div class="a" style="left:1331px;top:1077px;width:319px;height:54px;background:#e3ecf8;border:2px solid #2c3339"></div>
<div class="a" style="left:1652px;top:1077px;width:319px;height:54px;background:#e3ecf8;border:2px solid #2c3339"></div>
<div class="a" style="left:1972px;top:1077px;width:317px;height:54px;background:#e3ecf8;border:2px solid #2c3339"></div>
<svg class="a" style="left:1032px;top:1087px" width="30" height="34" viewBox="0 0 30 34"><path d="M3 6 Q15 0 27 4 L24 32 Q12 34 2 30Z" fill="#1d3b5f"/><path d="M15 8 L22 8 L12 28 L6 28Z" fill="#3b8fe0"/></svg><div class="a" style="left:1058px;top:1088px;font-size:28px;color:#111;white-space:nowrap">数据库...</div><div class="a" style="left:1202px;top:1086px;width:36px;height:36px;border:2px solid #7a8ca0;background:#dfe8f4"></div><div class="a" style="left:1242px;top:1086px;width:36px;height:36px;border:2px solid #7a8ca0;background:#dfe8f4"></div><div class="a" style="left:1282px;top:1086px;width:36px;height:36px;border:2px solid #7a8ca0;background:#dfe8f4"></div><svg class="a" style="left:1353px;top:1087px" width="30" height="34" viewBox="0 0 30 34"><path d="M3 6 Q15 0 27 4 L24 32 Q12 34 2 30Z" fill="#1d3b5f"/><path d="M15 8 L22 8 L12 28 L6 28Z" fill="#3b8fe0"/></svg><div class="a" style="left:1379px;top:1088px;font-size:28px;color:#111;white-space:nowrap">帐号登...</div><div class="a" style="left:1523px;top:1086px;width:36px;height:36px;border:2px solid #7a8ca0;background:#dfe8f4"></div><div class="a" style="left:1563px;top:1086px;width:36px;height:36px;border:2px solid #7a8ca0;background:#dfe8f4"></div><div class="a" style="left:1603px;top:1086px;width:36px;height:36px;border:2px solid #7a8ca0;background:#dfe8f4"></div><svg class="a" style="left:1674px;top:1087px" width="30" height="34" viewBox="0 0 30 34"><path d="M3 6 Q15 0 27 4 L24 32 Q12 34 2 30Z" fill="#1d3b5f"/><path d="M15 8 L22 8 L12 28 L6 28Z" fill="#3b8fe0"/></svg><div class="a" style="left:1700px;top:1088px;font-size:28px;color:#111;white-space:nowrap">引擎日...</div><div class="a" style="left:1844px;top:1086px;width:36px;height:36px;border:2px solid #7a8ca0;background:#dfe8f4"></div><div class="a" style="left:1884px;top:1086px;width:36px;height:36px;border:2px solid #7a8ca0;background:#dfe8f4"></div><div class="a" style="left:1924px;top:1086px;width:36px;height:36px;border:2px solid #7a8ca0;background:#dfe8f4"></div><svg class="a" style="left:1994px;top:1087px" width="30" height="34" viewBox="0 0 30 34"><path d="M3 6 Q15 0 27 4 L24 32 Q12 34 2 30Z" fill="#1d3b5f"/><path d="M15 8 L22 8 L12 28 L6 28Z" fill="#3b8fe0"/></svg>
<div class="a" style="left:2020px;top:1088px;font-size:28px;color:#111;white-space:nowrap">游戏网...</div>
<div class="a" style="left:2164px;top:1086px;width:36px;height:36px;border:2px solid #7a8ca0;background:#dfe8f4"></div>
<div class="a" style="left:2204px;top:1086px;width:36px;height:36px;border:2px solid #7a8ca0;background:#dfe8f4"></div>
<div class="a" style="left:2244px;top:1086px;width:36px;height:36px;border:2px solid #7a8ca0;background:#dfe8f4"></div>
<div class="a" style="left:2174px;top:1096px;width:14px;height:12px;border:3px solid #111"></div>
<div class="a" style="left:2180px;top:1091px;width:13px;height:11px;border-top:3px solid #111;border-right:3px solid #111"></div>
<div class="a" style="left:2213px;top:1096px;width:18px;height:14px;border:4px solid #111"></div>
<svg class="a" style="left:2252px;top:1094px" width="20" height="20" viewBox="0 0 20 20"><path d="M2 2 L18 18 M18 2 L2 18" stroke="#111" stroke-width="4"/></svg>

<!-- inner MDI window -->
<div class="a" style="left:1010px;top:296px;width:988px;height:819px;background:#a6c0dc;border:3px solid #28323c;border-right-width:2px"></div>
<div class="a" style="left:1013px;top:299px;width:982px;height:2px;background:#b7cde4"></div>
<svg class="a" style="left:1032px;top:319px" width="29" height="29" viewBox="0 0 29 29"><circle cx="14.5" cy="15" r="13.5" fill="#7a2a2a" opacity=".5"/><circle cx="14.5" cy="14" r="13" fill="#e0252e"/><text x="14.5" y="19" font-size="13" font-weight="bold" text-anchor="middle" fill="#fff" font-family="Liberation Sans">DX</text></svg>
<div class="a" style="left:1309px;top:318px;font-size:30px;letter-spacing:0.6px;color:#111;white-space:nowrap">反清复明01区 [无限版]</div>
<div class="a" style="left:1862px;top:317px;width:36px;height:36px;border:2px solid #6f8ba8;background:#a6c0dc"></div>
<div class="a" style="left:1902px;top:317px;width:36px;height:36px;border:2px solid #6f8ba8;background:#a6c0dc"></div>
<div class="a" style="left:1942px;top:317px;width:36px;height:36px;border:2px solid #c45a40;background:#dc6a50"></div>
<div class="a" style="left:1870px;top:336px;width:18px;height:6px;background:#111"></div>
<div class="a" style="left:1911px;top:327px;width:18px;height:13px;border:4px solid #111"></div>
<svg class="a" style="left:1949px;top:325px" width="22" height="19" viewBox="0 0 22 19"><path d="M2 1 L20 18 M20 1 L2 18" stroke="#111" stroke-width="4.5"/></svg>
<!-- menu bar -->
<div class="a" style="left:1026px;top:359px;width:957px;height:39px;background:#f0f0f0"></div>
<div class="mi" style="left:1039px">控制(C)</div>
<div class="mi" style="left:1147px">查看(V)</div>
<div class="mi" style="left:1254px">选项(P)</div>
<div class="mi" style="left:1361px">管理(M)</div>
<div class="mi" style="left:1477px">工具(T)</div>
<div class="mi" style="left:1583px">帮助(H)</div>
<!-- body area -->
<div class="a" style="left:1026px;top:398px;width:957px;height:700px;background:#f0f0f0"></div>
<!-- console -->
<div class="a" style="left:1026px;top:398px;width:954px;height:360px;background:#fff;border-top:2px solid #a0a0a0;border-left:2px solid #a0a0a0"></div>
<div id="con" class="a" style="left:1030px;top:402px;width:914px;height:353px;background:#000;overflow:hidden"><div class="ln" style="top:-14px"><span style="left:11px">2022/9/12 7:35:32</span><span class="c" style="left:264px">在线数:</span><span style="left:369px">115</span><span class="c" style="left:425px">离线数:</span><span style="left:533px">115</span><span class="c" style="left:588px">假人数:</span><span style="left:694px">0</span></div><div class="ln" style="top:18px"><span style="left:11px">2022/9/12 7:45:31</span><span class="c" style="left:264px">在线数:</span><span style="left:369px">115</span><span class="c" style="left:425px">离线数:</span><span style="left:533px">115</span><span class="c" style="left:588px">假人数:</span><span style="left:694px">0</span></div><div class="ln" style="top:50px"><span style="left:11px">2022/9/12 7:55:30</span><span class="c" style="left:264px">在线数:</span><span style="left:369px">115</span><span class="c" style="left:425px">离线数:</span><span style="left:533px">115</span><span class="c" style="left:588px">假人数:</span><span style="left:694px">0</span></div><div class="ln" style="top:82px"><span style="left:11px">2022/9/12 8:05:29</span><span class="c" style="left:264px">在线数:</span><span style="left:369px">115</span><span class="c" style="left:425px">离线数:</span><span style="left:533px">115</span><span class="c" style="left:588px">假人数:</span><span style="left:694px">0</span></div><div class="ln" style="top:114px"><span style="left:11px">2022/9/12 8:15:28</span><span class="c" style="left:264px">在线数:</span><span style="left:369px">115</span><span class="c" style="left:425px">离线数:</span><span style="left:533px">115</span><span class="c" style="left:588px">假人数:</span><span style="left:694px">0</span></div><div class="ln" style="top:146px"><span style="left:11px">2022/9/12 8:25:27</span><span class="c" style="left:264px">在线数:</span><span style="left:369px">115</span><span class="c" style="left:425px">离线数:</span><span style="left:533px">115</span><span class="c" style="left:588px">假人数:</span><span style="left:694px">0</span></div><div class="ln" style="top:178px"><span style="left:11px">2022/9/12 8:35:26</span><span class="c" style="left:264px">在线数:</span><span style="left:369px">115</span><span class="c" style="left:425px">离线数:</span><span style="left:533px">115</span><span class="c" style="left:588px">假人数:</span><span style="left:694px">0</span></div><div class="ln" style="top:210px"><span style="left:11px">2022/9/12 8:45:25</span><span class="c" style="left:264px">在线数:</span><span style="left:369px">115</span><span class="c" style="left:425px">离线数:</span><span style="left:533px">115</span><span class="c" style="left:588px">假人数:</span><span style="left:694px">0</span></div><div class="ln" style="top:242px"><span style="left:11px">2022/9/12 8:55:24</span><span class="c" style="left:264px">在线数:</span><span style="left:369px">115</span><span class="c" style="left:425px">离线数:</span><span style="left:533px">115</span><span class="c" style="left:588px">假人数:</span><span style="left:694px">0</span></div><div class="ln" style="top:274px"><span style="left:11px">2022/9/12 9:05:23</span><span class="c" style="left:264px">在线数:</span><span style="left:369px">115</span><span class="c" style="left:425px">离线数:</span><span style="left:533px">115</span><span class="c" style="left:588px">假人数:</span><span style="left:694px">0</span></div><div class="ln" style="top:306px"><span style="left:11px">2022/9/12 9:15:21</span><span class="c" style="left:264px">在线数:</span><span style="left:369px">115</span><span class="c" style="left:425px">离线数:</span><span style="left:533px">115</span><span class="c" style="left:588px">假人数:</span><span style="left:694px">0</span></div><div class="ln" style="top:338px"><span style="left:11px">2022/9/12 9:25:20</span><span class="c" style="left:264px">在线数:</span><span style="left:369px">115</span><span class="c" style="left:425px">离线数:</span><span style="left:533px">115</span><span class="c" style="left:588px">假人数:</span><span style="left:694px">0</span></div></div>
<div class="a" style="left:1944px;top:402px;width:33px;height:353px;background:#fcfcfc;border-left:1px solid #e8e8e8"></div>
<svg class="a" style="left:1952px;top:412px" width="18" height="14" viewBox="0 0 18 14"><path d="M2 11 L9 3 L16 11" stroke="#606060" stroke-width="2.2" fill="none"/></svg>
<svg class="a" style="left:1952px;top:731px" width="18" height="14" viewBox="0 0 18 14"><path d="M2 3 L9 11 L16 3" stroke="#606060" stroke-width="2.2" fill="none"/></svg>
<div class="a" style="left:1945px;top:687px;width:31px;height:32px;background:#d6d6d6;border:1px solid #c6c6c6"></div>
<!-- status -->
<div class="st" style="left:1026px;top:764px">LbRunSocketTime</div>
<div class="st" style="left:1026px;top:797px">Run61/61 Soc0/0 Usr0/59</div>
<div class="st" style="left:1026px;top:829px">Hum5/21 Mon5/59 UsrRot113/439 Merch0/71 Npc0/16 (0)</div>
<div class="st" style="left:1026px;top:856px"><span class="cjk">地瘟</span>,30/881 - <span class="cjk">密宗★喇嘛</span>/723/174</div>
<div class="st" style="left:1026px;top:887px">MonG0/1/13 MonP5/59/270 ObjRun0/1</div>
<div class="st" style="left:1427px;top:770px"><span class="cjk">引擎</span>:670:34:56 [M][F]</div>
<div class="st" style="left:1708px;top:770px">[<span class="cjk">刷怪</span>:59940]</div>
<div class="st" style="left:1708px;top:806px">[<span class="cjk">在线</span>:115/115/0]</div>
<div class="st" style="left:1708px;top:842px">[<span class="cjk">本机</span>:34.7998<span class="cjk">天</span>]</div>
<div class="st" style="left:1627px;top:879px;color:#1010e0"><span class="cjk">引擎版本</span>: 4.00 Build 20211212</div>
<!-- grid -->
<div class="a" style="left:1027px;top:918px;width:953px;height:181px;background:#fff;border-top:2px solid #a0a0a0;border-left:2px solid #a0a0a0"></div>
<div id="grid" class="a" style="left:1031px;top:922px;width:896px;height:176px;overflow:hidden"><div class="a" style="left:64px;top:0;width:2px;height:176px;background:#ececec"></div><div class="a" style="left:305px;top:0;width:2px;height:176px;background:#ececec"></div><div class="a" style="left:417px;top:0;width:2px;height:176px;background:#ececec"></div><div class="a" style="left:529px;top:0;width:2px;height:176px;background:#ececec"></div><div class="a" style="left:641px;top:0;width:2px;height:176px;background:#ececec"></div><div class="a" style="left:773px;top:0;width:2px;height:176px;background:#ececec"></div><div class="a" style="left:895px;top:0;width:2px;height:176px;background:#ececec"></div><div class="a" style="left:0;top:31px;width:896px;height:2px;background:#ececec"></div><div class="a" style="left:0;top:65px;width:896px;height:2px;background:#ececec"></div><div class="a" style="left:0;top:99px;width:896px;height:2px;background:#ececec"></div><div class="a" style="left:0;top:133px;width:896px;height:2px;background:#ececec"></div><div class="a" style="left:0;top:168px;width:896px;height:2px;background:#ececec"></div><div class="a" style="left:0;top:202px;width:896px;height:2px;background:#ececec"></div><div class="a" style="left:0;top:0px;width:64px;height:32px;border-right:2px solid #d9d9d9;border-bottom:3px solid #d9d9d9;border-top:1px solid #f8f8f8"></div><div class="a" style="left:0;top:32px;width:64px;height:34px;border-right:2px solid #d9d9d9;border-bottom:3px solid #d9d9d9;border-top:1px solid #f8f8f8"></div><div class="a" style="left:0;top:66px;width:64px;height:34px;border-right:2px solid #d9d9d9;border-bottom:3px solid #d9d9d9;border-top:1px solid #f8f8f8"></div><div class="a" style="left:0;top:100px;width:64px;height:34px;border-right:2px solid #d9d9d9;border-bottom:3px solid #d9d9d9;border-top:1px solid #f8f8f8"></div><div class="a" style="left:0;top:134px;width:64px;height:35px;border-right:2px solid #d9d9d9;border-bottom:3px solid #d9d9d9;border-top:1px solid #f8f8f8"></div><div class="a" style="left:0;top:169px;width:64px;height:34px;border-right:2px solid #d9d9d9;border-bottom:3px solid #d9d9d9;border-top:1px solid #f8f8f8"></div><div class="a" style="left:65px;top:34px;width:830px;height:32px;background:#dcebfb;border:2px solid #3a9ae0"></div><div class="a" style="left:305px;top:34px;width:2px;height:32px;background:#ececec"></div><div class="a" style="left:417px;top:34px;width:2px;height:32px;background:#ececec"></div><div class="a" style="left:529px;top:34px;width:2px;height:32px;background:#ececec"></div><div class="a" style="left:641px;top:34px;width:2px;height:32px;background:#ececec"></div><div class="a" style="left:773px;top:34px;width:2px;height:32px;background:#ececec"></div><div class="a" style="left:10px;top:2px;font-size:25px;color:#111;white-space:nowrap">网关</div><div class="a" style="left:76px;top:2px;font-size:25px;color:#111;white-space:nowrap">网关地址</div><div class="a" style="left:318px;top:2px;font-size:25px;color:#111;white-space:nowrap">队列数据</div><div class="a" style="left:430px;top:2px;font-size:25px;color:#111;white-space:nowrap">发送数据</div><div class="a" style="left:542px;top:2px;font-size:25px;color:#111;white-space:nowrap">剩余数据</div><div class="a" style="left:654px;top:2px;font-size:25px;color:#111;white-space:nowrap">平均流量</div><div class="a" style="left:786px;top:2px;font-size:25px;color:#111;white-space:nowrap">最高人数</div><div class="st" style="left:10px;top:36px">0</div><div class="st" style="left:76px;top:36px">127.0.0.1:63694</div><div class="st" style="left:318px;top:36px">0</div><div class="st" style="left:430px;top:36px">0</div><div class="st" style="left:542px;top:36px">0</div><div class="st" style="left:654px;top:36px">0b</div><div class="st" style="left:786px;top:36px">0/14</div></div>
<div class="a" style="left:1944px;top:922px;width:33px;height:172px;background:#fcfcfc;border:1px solid #dcdcdc"></div>
<svg class="a" style="left:1952px;top:934px" width="18" height="14" viewBox="0 0 18 14"><path d="M2 11 L9 3 L16 11" stroke="#606060" stroke-width="2.2" fill="none"/></svg>
<svg class="a" style="left:1952px;top:1071px" width="18" height="14" viewBox="0 0 18 14"><path d="M2 3 L9 11 L16 3" stroke="#606060" stroke-width="2.2" fill="none"/></svg>
<div class="a" style="left:1945px;top:957px;width:31px;height:32px;background:#d6d6d6;border:1px solid #c6c6c6"></div>

<!-- taskbar -->
<div id="tb" class="a"></div>
<svg class="a" style="left:108px;top:1690px" width="34" height="32" viewBox="0 0 34 32"><rect x="1" y="1" width="15" height="29" fill="#fff"/><rect x="3" y="3" width="11" height="6" fill="#2a7ad8"/><rect x="3" y="11" width="5" height="17" fill="#2a7ad8"/><rect x="9" y="14" width="24" height="17" rx="2" fill="#fff"/><rect x="11" y="18" width="20" height="11" fill="#8a96a4"/><rect x="17" y="11" width="8" height="5" fill="none" stroke="#fff" stroke-width="2"/></svg>
<svg class="a" style="left:24px;top:1721px" width="31" height="31" viewBox="0 0 31 31"><path d="M0 4.5 L13 2.8 L13 14.5 L0 14.5Z M14.5 2.6 L30 0.5 L30 14.5 L14.5 14.5Z M0 16 L13 16 L13 27.7 L0 26Z M14.5 16 L30 16 L30 30.5 L14.5 28.4Z" fill="#f4fbfe"/></svg>
<div class="ti" style="left:171px;top:1677px;width:281px"><svg class="ic"  viewBox="0 0 32 32" style="left:16px;width:32px;height:32px;top:12px"><path d="M2 5 L12 5 L14 8 L30 8 L30 28 L2 28Z" fill="#e8c25a"/><path d="M2 10 L30 10 L30 28 L2 28Z" fill="#f8e39a"/><path d="M6 28 L6 18 Q16 12 26 18 L26 28 L21 28 L21 22 L11 22 L11 28Z" fill="#3d8fdc"/><rect x="3" y="4" width="4" height="3" fill="#4caf50"/></svg><div class="tx" style="left:57px">文件资源管理器</div></div>
<div class="ti" style="left:453px;top:1677px;width:281px"><svg class="ic"  viewBox="0 0 32 32" style="left:16px;width:32px;height:32px;top:12px"><path d="M3 5 L13 5 L15 8 L29 8 L29 27 L3 27Z" fill="#e8c25a"/><path d="M3 12 L29 12 L29 27 L3 27Z" fill="#f6dc8a"/></svg><div class="tx" style="left:57px">小马制作</div></div>
<div class="ti" style="left:735px;top:1677px;width:281px"><svg class="ic"  viewBox="0 0 32 32" style="left:16px;width:32px;height:32px;top:12px"><path d="M2 14 L6 9 L28 9 L31 14 L31 24 L2 24Z" fill="#d8dde2" stroke="#7d8790" stroke-width="1.5"/><rect x="23" y="17" width="4" height="4" fill="#3bb54a"/></svg><div class="tx" style="left:57px">新加卷 (D:)</div></div>
<div class="ti" style="left:1017px;top:1677px;width:281px"><svg class="ic"  viewBox="0 0 32 32" style="left:16px;width:32px;height:32px;top:12px"><rect x="3" y="6" width="5" height="20" fill="#d0d4d8"/><rect x="8" y="3" width="22" height="17" fill="#e8ecef" stroke="#7f8a94"/><rect x="10" y="5" width="18" height="13" fill="#1a3ac8"/><path d="M12 5 L20 5 L14 18 L10 18Z" fill="#5e86ff" opacity=".6"/><rect x="15" y="21" width="8" height="4" fill="#c8ccd0"/></svg><div class="tx" style="left:57px">这台电脑</div></div>
<div class="ti" style="left:1302px;top:1677px;width:281px"><svg class="ic"  viewBox="0 0 32 32" style="left:16px;width:32px;height:32px;top:12px"><rect x="1" y="1" width="30" height="30" rx="7" fill="#fff"/><circle cx="16" cy="12" r="5" fill="none" stroke="#e84a5f" stroke-width="3"/><circle cx="10" cy="19" r="5" fill="none" stroke="#2a9df4" stroke-width="3"/><circle cx="22" cy="19" r="5" fill="none" stroke="#2a9df4" stroke-width="3"/></svg><div class="tx" style="left:57px">欢迎使用百度网盘</div></div>
<div class="ti" style="left:1589px;top:1677px;width:281px;background:#e0a0a6;border-color:#c07a82"><svg class="ic"  viewBox="0 0 33 33" style="left:16px;width:32px;height:32px;top:12px"><circle cx="16.5" cy="16.5" r="16" fill="#1b0d0d"/><path d="M5 8 L11 8 L16.5 22 L22 8 L28 8 L18 28 L15 28Z" fill="#d8202a"/><path d="M12 11 Q16.5 15 21 11 L16.5 19Z" fill="#bdb6b0" opacity=".8"/></svg><div class="tx" style="left:57px">V8M2引擎控制台...</div></div>
<div class="ti" style="left:1873px;top:1677px;width:281px"><svg class="ic"  viewBox="0 0 32 32" style="left:16px;width:32px;height:32px;top:12px"><circle cx="14" cy="13" r="10" fill="none" stroke="#b8c8d8" stroke-width="4"/><rect x="12" y="14" width="17" height="15" fill="#eef3f8" stroke="#8aa0b8"/><path d="M15 22 L19 26 L26 17" stroke="#2a7ad8" stroke-width="2.5" fill="none"/></svg><div class="tx" style="left:57px">管理工具</div></div>
<div class="ti" style="left:2161px;top:1677px;width:281px"><svg class="ic"  viewBox="0 0 33 33" style="left:16px;width:32px;height:32px;top:12px"><circle cx="16.5" cy="16.5" r="16" fill="#1b0d0d"/><path d="M5 8 L11 8 L16.5 22 L22 8 L28 8 L18 28 L15 28Z" fill="#d8202a"/><path d="M12 11 Q16.5 15 21 11 L16.5 19Z" fill="#bdb6b0" opacity=".8"/></svg><div class="tx" style="left:57px">V8M2引擎控制台...</div></div>
<div class="ti" style="left:83px;top:1740px;width:319px;height:62px"><svg class="ic" viewBox="0 0 32 32" style="left:18px;width:32px;height:32px;top:12px"><path d="M3 10 L17 10 L21 14 L21 30 L3 30Z" fill="#fff" stroke="#333" stroke-width="1.5"/><path d="M6 16 L16 16 M6 20 L16 20 M6 24 L14 24" stroke="#666" stroke-width="1.5"/><path d="M15 8 Q15 2 22 2 Q29 2 29 8 Q29 12 23 14 L23 18" stroke="#222" stroke-width="6" fill="none"/><path d="M15 8 Q15 2 22 2 Q29 2 29 8 Q29 12 23 14 L23 18" stroke="#f5e020" stroke-width="3.5" fill="none"/><circle cx="23" cy="24" r="3" fill="#f5e020" stroke="#222"/></svg><div class="tx" style="left:59px;top:14px">v8m2引擎帮助文档</div></div>
<div class="ti" style="left:407px;top:1740px;width:319px;height:62px"><svg class="ic" viewBox="0 0 32 32" style="left:18px;width:32px;height:32px;top:12px"><circle cx="16" cy="16" r="14.5" fill="#000"/><path d="M16 1.5 A14.5 14.5 0 0 0 16 30.5 A7.25 7.25 0 0 0 16 16 A7.25 7.25 0 0 1 16 1.5Z" fill="#fff"/><circle cx="16" cy="8.75" r="2.3" fill="#fff"/><circle cx="16" cy="23.25" r="2.3" fill="#000"/></svg><div class="tx" style="left:59px;top:14px">无极数据库编辑器 V...</div></div>
<div class="ti" style="left:731px;top:1740px;width:319px;height:62px"><svg class="ic" viewBox="0 0 32 32" style="left:18px;width:32px;height:32px;top:12px"><rect x="7" y="3" width="23" height="18" fill="#e8eef4" stroke="#6a7c8c"/><path d="M9 14 L14 14 L17 7 L20 17 L23 11 L28 11" stroke="#2a7ad8" stroke-width="2" fill="none"/><rect x="1" y="14" width="5" height="16" fill="#c8d0d8"/><rect x="14" y="23" width="9" height="4" fill="#b8c0c8"/></svg><div class="tx" style="left:59px;top:14px">任务管理器</div></div>
<div class="ti" style="left:1054px;top:1740px;width:319px;height:62px"><svg class="ic" viewBox="0 0 33 33" style="left:18px;width:32px;height:32px;top:12px"><circle cx="16.5" cy="16.5" r="16" fill="#1b0d0d"/><path d="M5 8 L11 8 L16.5 22 L22 8 L28 8 L18 28 L15 28Z" fill="#d8202a"/><path d="M12 11 Q16.5 15 21 11 L16.5 19Z" fill="#bdb6b0" opacity=".8"/></svg><div class="tx" style="left:59px;top:14px">V8M2引擎控制台-反...</div></div>
<div class="ti" style="left:1378px;top:1740px;width:319px;height:62px"><svg class="ic" style="left:18px;width:32px;height:32px;top:12px" viewBox="0 0 32 32"><circle cx="19" cy="13" r="9" fill="none" stroke="#f46f0a" stroke-width="4.5"/><path d="M13 19 L5 28" stroke="#f46f0a" stroke-width="4.5"/></svg><div class="tx" style="left:59px;top:14px">Equip - Everything</div></div>
<div class="ti" style="left:1702px;top:1740px;width:319px;height:62px"><svg class="ic" viewBox="0 0 32 32" style="left:18px;width:32px;height:32px;top:12px"><path d="M4 4 L16 1 L28 4 L28 16 Q28 26 16 31 Q4 26 4 16Z" fill="#f7a21b"/><path d="M16 8 Q10 16 13 24 Q16 28 20 24 Q22 18 18 15 Q19 12 16 8Z" fill="#fff"/></svg><div class="tx" style="left:59px;top:14px">火绒安全软件</div></div>
<div class="ti" style="left:2026px;top:1740px;width:319px;height:62px"><svg class="ic" viewBox="0 0 32 32" style="left:18px;width:32px;height:32px;top:12px"><rect x="4" y="4" width="20" height="25" fill="#fff" stroke="#555"/><rect x="4" y="20" width="20" height="9" fill="#7bc84a"/><path d="M14 22 L28 4" stroke="#e8b020" stroke-width="4"/><path d="M28 4 L30 2" stroke="#c03030" stroke-width="4"/></svg><div class="tx" style="left:59px;top:14px">D:\Mirserver巨龙撞...</div></div>


<!-- watermark -->
<svg class="a" style="left:1311px;top:1735px" width="58" height="62" viewBox="0 0 58 62"><path d="M10 50 Q2 30 12 12 Q16 24 14 40Z" fill="#1a9ae0"/><path d="M14 14 Q24 0 40 2 Q30 14 20 30Z" fill="#8cc63f"/><path d="M6 42 Q20 62 46 56 Q30 52 14 38Z" fill="#f6d21a"/><path d="M32 18 Q58 22 52 46 Q46 58 30 50 Q46 44 44 32 Q40 22 32 18Z" fill="#e02020"/></svg>
<div class="a" style="left:1375px;top:1743px;width:37px;height:37px;border-radius:9px;background:#4b4b4b"></div><div class="a" style="left:1377px;top:1744px;font-size:33px;line-height:35px;color:#79c9e4;white-space:nowrap">老</div><div class="a" style="left:1414px;top:1743px;width:37px;height:37px;border-radius:9px;background:#4b4b4b"></div><div class="a" style="left:1416px;top:1744px;font-size:33px;line-height:35px;color:#79c9e4;white-space:nowrap">复</div><div class="a" style="left:1452px;top:1743px;width:37px;height:37px;border-radius:9px;background:#4b4b4b"></div><div class="a" style="left:1454px;top:1744px;font-size:33px;line-height:35px;color:#79c9e4;white-space:nowrap">批</div><div class="a" style="left:1490px;top:1743px;width:37px;height:37px;border-radius:9px;background:#4b4b4b"></div><div class="a" style="left:1492px;top:1744px;font-size:33px;line-height:35px;color:#79c9e4;white-space:nowrap">论</div><div class="a" style="left:1529px;top:1743px;width:37px;height:37px;border-radius:9px;background:#4b4b4b"></div><div class="a" style="left:1531px;top:1744px;font-size:33px;line-height:35px;color:#79c9e4;white-space:nowrap">坛</div>
<div class="a" style="left:1374px;top:1780px;font-size:13px;color:#555;white-space:nowrap;letter-spacing:15px">LSPM2.NET</div>
<!-- Rungate -->
<div class="a" style="left:0;top:1611px;width:329px;height:65px;background:#c6d7df"></div>
<div class="a" style="left:99px;top:1622px;font-size:31px;letter-spacing:1.2px;color:#111;white-space:nowrap">Rungate</div>
<div class="a" style="left:272px;top:1620px;width:42px;height:41px;border:2px solid #3c4448"></div>
<svg class="a" style="left:286px;top:1634px" width="14" height="14" viewBox="0 0 14 14"><path d="M2 2 L12 12 M12 2 L2 12" stroke="#111" stroke-width="3"/></svg>
<div class="a" style="left:0;top:1797px;width:2880px;height:3px;background:#3c5660"></div>
<!-- tray -->
<svg class="a" style="left:2460px;top:1702px" width="18" height="10" viewBox="0 0 18 10"><path d="M1 9 L9 1 L17 9Z" fill="#111"/></svg>
<svg class="a" style="left:2501px;top:1691px" width="36" height="34" viewBox="0 0 36 34"><path d="M3 2 L3 31" stroke="#111" stroke-width="4"/><path d="M3 2 L3 31" stroke="#fff" stroke-width="2"/><path d="M5 3 L16 3 L18 7 L30 7 L30 18 L5 18Z" fill="#fff" stroke="#333" stroke-width="1"/><circle cx="24" cy="26" r="7.5" fill="#e02030" stroke="#fff" stroke-width="1.2"/><path d="M20.5 22.5 L27.5 29.5 M27.5 22.5 L20.5 29.5" stroke="#fff" stroke-width="2.2"/></svg>
<svg class="a" style="left:2550px;top:1691px" width="34" height="33" viewBox="0 0 34 33"><g stroke="#1a2a30" stroke-width="5" fill="none" stroke-linejoin="round"><rect x="3" y="3" width="7" height="10" rx="3.5"/><path d="M6.5 13 L6.5 30"/><path d="M13 5 L30 5 L30 22 L13 22 M21.5 22 L21.5 28 M15 28 L28 28"/></g><g stroke="#fff" stroke-width="2.2" fill="none" stroke-linejoin="round"><rect x="3" y="3" width="7" height="10" rx="3.5"/><path d="M6.5 13 L6.5 30"/><path d="M13 5 L30 5 L30 22 L13 22 M21.5 22 L21.5 28 M15 28 L28 28"/></g></svg>
<svg class="a" style="left:2607px;top:1722px" width="28" height="32" viewBox="0 0 28 32"><g stroke="#1a2a30" stroke-width="5.5" fill="none"><rect x="3" y="8" width="22" height="13"/><path d="M14 2 L14 30"/></g><g stroke="#fff" stroke-width="2.6" fill="none"><rect x="3" y="8" width="22" height="13"/><path d="M14 2 L14 30"/></g></svg>
<svg class="a" style="left:2660px;top:1720px" width="36" height="36" viewBox="0 0 36 36"><g transform="rotate(-12 18 18)"><rect x="4" y="5" width="28" height="27" rx="5" fill="#f0561e"/><path d="M25 12 Q18 8 12 12 Q9 16 15 18 Q23 19 22 23 Q17 27 10 24" stroke="#fff" stroke-width="4.5" fill="none"/></g></svg>
<svg class="a" style="left:2501px;top:1749px" width="36" height="34" viewBox="0 0 36 34"><path d="M3 11 L9 11 L17 3 L17 29 L9 21 L3 21Z" fill="#fff" stroke="#111" stroke-width="1.5"/><circle cx="24" cy="25" r="7.5" fill="#e02030" stroke="#fff" stroke-width="1.2"/><path d="M20.5 21.5 L27.5 28.5 M27.5 21.5 L20.5 28.5" stroke="#fff" stroke-width="2.2"/></svg>
<div class="a" style="left:2757px;top:1698px;font-size:25px;color:#111;white-space:nowrap">10:18</div>
<div class="a" style="left:2730px;top:1748px;font-size:26px;color:#111;white-space:nowrap">2022/9/12</div>
<!-- IME bar -->
<div class="a" style="left:2570px;top:1623px;width:307px;height:52px;background:#fff;border-radius:6px"></div>
<svg class="a" style="left:2520px;top:1612px" width="72" height="66" viewBox="0 0 72 66"><g transform="rotate(-16 36 33)"><rect x="8" y="6" width="56" height="54" rx="8" fill="#f0561e"/><path d="M54 22 Q38 12 22 20 Q14 27 30 31 Q50 34 48 40 Q40 50 18 45" stroke="#fff" stroke-width="9" fill="none"/></g></svg>
<svg class="a" style="left:2599px;top:1636px" width="30" height="30" viewBox="0 0 30 30"><rect x="2.5" y="7.5" width="24" height="12" rx="2" fill="none" stroke="#1a6fd6" stroke-width="5"/><path d="M14.5 1 L14.5 29" stroke="#1a6fd6" stroke-width="5"/></svg>
<svg class="a" style="left:2651px;top:1636px" width="26" height="30" viewBox="0 0 26 30"><circle cx="5" cy="8" r="3.2" fill="none" stroke="#1a6fd6" stroke-width="2.6"/><circle cx="19" cy="17" r="4" fill="#1a6fd6"/><path d="M21.5 18 Q22 24 16 26" stroke="#1a6fd6" stroke-width="3.5" fill="none"/></svg>
<svg class="a" style="left:2697px;top:1633px" width="26" height="32" viewBox="0 0 26 32"><rect x="7" y="1" width="12" height="20" rx="6" fill="#1a6fd6"/><path d="M3 15 Q3 26 13 26 Q23 26 23 15" stroke="#1a6fd6" stroke-width="2.5" fill="none"/><path d="M13 26 L13 31 M8 31 L18 31" stroke="#1a6fd6" stroke-width="2.5"/></svg>
<svg class="a" style="left:2744px;top:1637px" width="32" height="26" viewBox="0 0 32 26"><rect x="0" y="1" width="31" height="24" rx="4" fill="#1a6fd6"/><g fill="#fff"><rect x="4" y="5" width="4" height="3.5"/><rect x="10" y="5" width="4" height="3.5"/><rect x="16" y="5" width="4" height="3.5"/><rect x="22" y="5" width="4" height="3.5"/><rect x="4" y="11" width="4" height="3.5"/><rect x="10" y="11" width="4" height="3.5"/><rect x="16" y="11" width="4" height="3.5"/><rect x="22" y="11" width="4" height="3.5"/><rect x="7" y="17" width="17" height="3.5"/></g></svg>
<svg class="a" style="left:2791px;top:1635px" width="32" height="30" viewBox="0 0 32 30"><path d="M10 1 Q16 5 22 1 L31 6 L28 13 L25 12 L25 29 L7 29 L7 12 L4 13 L1 6Z" fill="#1a6fd6"/></svg>
<svg class="a" style="left:2842px;top:1638px" width="28" height="27" viewBox="0 0 28 27"><rect x="0" y="0" width="12" height="12" rx="3.5" fill="#1a6fd6"/><rect x="15" y="0" width="12" height="12" rx="3.5" fill="#1a6fd6"/><circle cx="21" cy="6" r="2" fill="#fff"/><rect x="0" y="15" width="12" height="12" rx="3.5" fill="#1a6fd6"/><rect x="15" y="15" width="12" height="12" rx="3.5" fill="#1a6fd6"/></svg>

</body></html>
